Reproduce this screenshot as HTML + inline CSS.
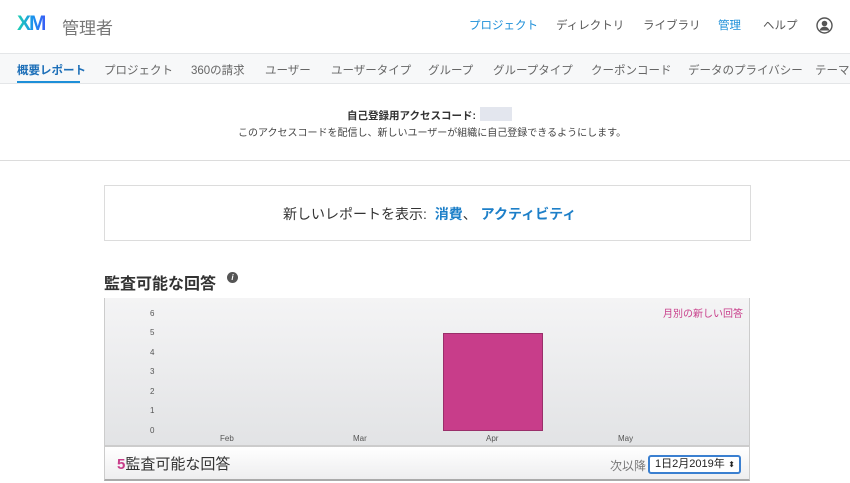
<!DOCTYPE html><html><head><meta charset="utf-8"><style>
*{margin:0;padding:0;box-sizing:border-box}
body{width:850px;height:483px;overflow:hidden;background:#fff;font-family:"Liberation Sans","Noto Sans CJK JP",sans-serif;position:relative;color:#333}
.a{position:absolute;white-space:nowrap}
.top a{position:absolute;top:17px;font-size:11.5px;color:#555;white-space:nowrap}
.nav{position:absolute;top:53px;left:0;width:850px;height:31px;background:#f7f8f9;border-top:1px solid #e4e6e8;border-bottom:1px solid #e4e6e8;overflow:hidden}
.nav span{position:absolute;top:8px;font-size:11.5px;color:#666;white-space:nowrap}
.y{position:absolute;left:150px;font-size:8px;color:#555}
.m{position:absolute;top:434px;font-size:8px;color:#555}
</style></head><body>
<div class="a" style="left:17px;top:12px;font-size:21px;font-weight:bold;letter-spacing:-2px;background:linear-gradient(90deg,#1fd1b0,#1b8ef0 60%,#3a5ef5);-webkit-background-clip:text;color:transparent">XM</div>
<div class="a" style="left:62px;top:14px;font-size:17px;color:#777">管理者</div>
<div class="top">
<a style="left:469px;color:#1d8fd8">プロジェクト</a>
<a style="left:556px">ディレクトリ</a>
<a style="left:643px">ライブラリ</a>
<a style="left:718px;color:#1d8fd8">管理</a>
<a style="left:763px">ヘルプ</a>
</div>
<svg class="a" style="left:816px;top:17px" width="17" height="17" viewBox="0 0 17 17"><circle cx="8.5" cy="8.5" r="7.5" fill="none" stroke="#555" stroke-width="1.4"/><circle cx="8.5" cy="6.5" r="2.8" fill="#555"/><path d="M3.5 13.5c1-3 3-3.8 5-3.8s4 .8 5 3.8" fill="#555"/></svg>
<div class="nav">
<span style="left:17px;color:#1d6fb8;font-weight:bold">概要レポート</span>
<div class="a" style="left:17px;top:27px;width:63px;height:3px;background:#1d8fd8"></div>
<span style="left:104px">プロジェクト</span>
<span style="left:191px">360の請求</span>
<span style="left:265px">ユーザー</span>
<span style="left:331px">ユーザータイプ</span>
<span style="left:428px">グループ</span>
<span style="left:493px">グループタイプ</span>
<span style="left:591px">クーポンコード</span>
<span style="left:688px">データのプライバシー</span>
<span style="left:815px">テーマ</span>
</div>
<div class="a" style="left:347px;top:108px;font-size:10.5px;font-weight:bold;color:#333">自己登録用アクセスコード:</div>
<div class="a" style="left:480px;top:107px;width:32px;height:14px;background:#e3e6ee"></div>
<div class="a" style="left:238px;top:124px;font-size:10px;color:#444">このアクセスコードを配信し、新しいユーザーが組織に自己登録できるようにします。</div>
<div class="a" style="left:0;top:160px;width:850px;height:1px;background:#dcdcdc"></div>
<div class="a" style="left:104px;top:185px;width:647px;height:56px;border:1px solid #dcdcdc"></div>
<div class="a" style="left:283px;top:204px;font-size:14px;color:#333">新しいレポートを表示: <span style="color:#1d7fc8;font-weight:bold;margin-left:4px">消費</span>、 <span style="color:#1d7fc8;font-weight:bold">アクティビティ</span></div>
<div class="a" style="left:104px;top:270px;font-size:16px;font-weight:bold;color:#333">監査可能な回答</div>
<div class="a" style="left:227px;top:272px;width:11px;height:11px;border-radius:50%;background:#555;color:#fff;font-size:8px;font-weight:bold;text-align:center;line-height:11px;font-style:italic">i</div>
<div class="a" style="left:104px;top:298px;width:646px;height:148px;background:linear-gradient(#f4f4f5,#e2e3e5);border-left:1px solid #ccc;border-right:1px solid #ccc"></div>
<div class="a" style="left:663px;top:305px;font-size:10px;color:#c83d8a">月別の新しい回答</div>
<div class="y" style="top:309px">6</div><div class="y" style="top:328px">5</div><div class="y" style="top:348px">4</div><div class="y" style="top:367px">3</div><div class="y" style="top:387px">2</div><div class="y" style="top:406px">1</div><div class="y" style="top:426px">0</div>
<div class="a" style="left:443px;top:333px;width:100px;height:98px;background:#c83d8a;border:1px solid #9a2f6a"></div>
<div class="m" style="left:220px">Feb</div><div class="m" style="left:353px">Mar</div><div class="m" style="left:486px">Apr</div><div class="m" style="left:618px">May</div>
<div class="a" style="left:104px;top:445px;width:646px;height:36px;background:linear-gradient(#fff,#eeeeef);border:1px solid #ccc;border-top:2px solid #ccc;border-bottom:2px solid #aaa"></div>
<div class="a" style="left:117px;top:453px;font-size:15px;color:#333"><b style="color:#c83d8a">5</b>監査可能な回答</div>
<div class="a" style="left:610px;top:457px;font-size:12px;color:#777">次以降</div>
<div class="a" style="left:648px;top:455px;width:93px;height:19px;border:2px solid #3a7fd0;border-radius:3px;background:#fff;font-size:11px;line-height:15px;padding-left:5px;color:#222">1日2月2019年<span style="position:absolute;right:4px;top:0;font-size:8px">⬍</span></div>
</body></html>
